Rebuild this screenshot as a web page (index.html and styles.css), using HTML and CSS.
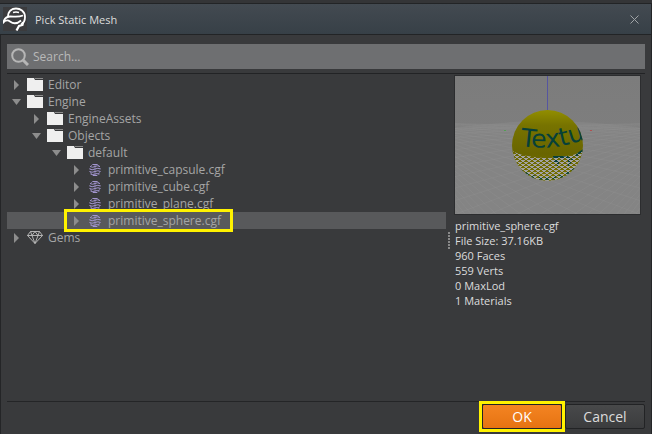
FILE: index.html
```html
<!DOCTYPE html>
<html lang="en">
<head>
<meta charset="utf-8">
<title>Pick Static Mesh</title>
<link rel="stylesheet" href="styles.css">
</head>
<body>
<svg width="0" height="0" class="sprites" aria-hidden="true">
  <symbol id="folder" viewBox="0 0 16 13"><path fill="#efefef" d="M0 0h7l1 2h8v11H0z"/><path fill="#8c8c8c" d="M8 0h8v1H8z"/></symbol>
  <symbol id="closed" viewBox="0 0 10 10"><path fill="#8d8d8d" d="M2 0l5 5-5 5z"/></symbol>
  <symbol id="open" viewBox="0 0 10 10"><path fill="#8d8d8d" d="M0 2h9L4.500 8z"/></symbol>
  <symbol id="mesh" viewBox="0 0 12 12"><g fill="none" stroke="#a295cf"><path d="M3.500 .5h5M1 2.500q2.500 1.500 5 0t5 0M.5 5q2.500 1.500 5.500 0t5.500 0M.5 7.500q2.500 1.500 5.500 0t5.500 0M1.500 10q2 1 4.500 0t4.500 0M4 11.500h4"/><path d="M3.500 .5l-2.500 2.500M8.500 .5l2.500 2.500M1 4v1M11 4v1M1 7.500l2.500 4M11 7.500l-2.500 4M6 1v10" stroke-width=".6"/></g></symbol>
  <symbol id="gem" viewBox="0 0 16 13"><path fill="none" stroke="#c0c0c0" d="M3.500.5h9L15.500 4.500 8 12.500.5 4.500zM.5 4.500h15M3.500.5l1.500 4 3 8 3-8 1.500-4M5 4.500l3-4 3 4" stroke-width=".9"/></symbol>
</svg>
<main class="dialog">
  <header class="titlebar">
    <svg class="logo" viewBox="0 0 24 24" aria-hidden="true"><path fill="#3b3b3d" d="M0 0h24v24H0z"/><g fill="none" stroke="#fff" stroke-width="1.800"><path d="M5 10C5 4 9 1.500 13 1.500S22 4 22 10c0 4-1 6-4 7.500"/><path d="M0 16.500C1 12 3 9.500 7 9.500c5 0 8 1 13-1"/><path d="M0 15.500C3 12.500 5 13 7 14.500s6 3.500 11-1"/><path d="M10 5.500q3-1 6 0" stroke-width="1.400"/><path d="M20 15l-.5 3-3.500 1-2.500 4.500" stroke-width="2.200"/></g></svg>
    <h1>Pick Static Mesh</h1>
    <button class="close" aria-label="Close"><svg viewBox="0 0 9 9"><path d="M.5.5l8 8M8.500.5l-8 8" stroke="#a0a4a7" stroke-width="1"/></svg></button>
  </header>
  <div class="body">
    <label class="search">
      <svg viewBox="0 0 18 18" aria-hidden="true"><g fill="none" stroke="#b6b6b6"><circle cx="7.500" cy="7.500" r="6.300" stroke-width="2"/><path d="M12 12l5 5" stroke-width="3"/></g></svg>
      <input type="text" placeholder="Search..." aria-label="Search">
    </label>
    <div class="content">
      <ul class="tree">
        <li><div class="row"><button aria-label="Expand Editor"><svg><use href="#closed"/></svg></button><svg class="icon"><use href="#folder"/></svg><span>Editor</span></div></li>
        <li><div class="row"><button aria-label="Collapse Engine"><svg><use href="#open"/></svg></button><svg class="icon"><use href="#folder"/></svg><span>Engine</span></div>
          <ul>
            <li><div class="row"><button aria-label="Expand EngineAssets"><svg><use href="#closed"/></svg></button><svg class="icon"><use href="#folder"/></svg><span>EngineAssets</span></div></li>
            <li><div class="row"><button aria-label="Collapse Objects"><svg><use href="#open"/></svg></button><svg class="icon"><use href="#folder"/></svg><span>Objects</span></div>
              <ul>
                <li><div class="row"><button aria-label="Collapse default"><svg><use href="#open"/></svg></button><svg class="icon"><use href="#folder"/></svg><span>default</span></div>
                  <ul>
                    <li><div class="row"><button aria-label="Expand primitive_capsule.cgf"><svg><use href="#closed"/></svg></button><svg class="icon mesh"><use href="#mesh"/></svg><span>primitive_capsule.cgf</span></div></li>
                    <li><div class="row"><button aria-label="Expand primitive_cube.cgf"><svg><use href="#closed"/></svg></button><svg class="icon mesh"><use href="#mesh"/></svg><span>primitive_cube.cgf</span></div></li>
                    <li><div class="row"><button aria-label="Expand primitive_plane.cgf"><svg><use href="#closed"/></svg></button><svg class="icon mesh"><use href="#mesh"/></svg><span>primitive_plane.cgf</span></div></li>
                    <li><div class="row selected"><div class="marked"><button aria-label="Expand primitive_sphere.cgf"><svg><use href="#closed"/></svg></button><svg class="icon mesh"><use href="#mesh"/></svg><span>primitive_sphere.cgf</span></div></div></li>
                  </ul>
                </li>
              </ul>
            </li>
          </ul>
        </li>
        <li><div class="row"><button aria-label="Expand Gems"><svg><use href="#closed"/></svg></button><svg class="icon"><use href="#gem"/></svg><span>Gems</span></div></li>
      </ul>
      <div class="splitter"></div>
      <aside class="preview">
        <svg class="view" viewBox="0 0 185 138" role="img" aria-label="Mesh preview">
          <defs>
            <linearGradient id="sky" x2="0" y2="1"><stop offset="0" stop-color="#7c7c7c"/><stop offset="1" stop-color="#818181"/></linearGradient>
            <linearGradient id="skin" x2="0" y2="1"><stop offset="0" stop-color="#949000"/><stop offset=".22" stop-color="#777300"/><stop offset=".6" stop-color="#696500"/><stop offset="1" stop-color="#777100"/></linearGradient>
            <pattern id="weave" width="6" height="4" patternUnits="userSpaceOnUse"><path fill="#a2a2a2" d="M0 0h4v1H0zM1 1h2v1H1zM3 2h3v1H3zM0 2h1v1H0zM4 3h2v1H4z"/></pattern>
            <clipPath id="ball"><circle cx="92.500" cy="69.500" r="35.500"/></clipPath>
            <path id="arc" d="M65 70Q95 74 115 68T150 56"/>
          </defs>
          <path fill="url(#sky)" d="M0 0h185v138H0z"/>
          <path fill="#848484" d="M0 52Q92 38 185 52v86H0z"/>
          <g id="floor" fill="none" stroke="#999" stroke-width=".6" opacity=".35"></g>
          <path stroke="#5555a0" d="M92.500 0v34"/>
          <path fill="#50a050" d="M49 54h2v1h-2z"/><path fill="#b05050" d="M135 54h2v1h-2z"/>
          <g clip-path="url(#ball)">
            <path fill="url(#skin)" d="M56 33h74v74H56z"/>
            <text class="texture"><textPath href="#arc">Textu</textPath></text>
            <path d="M98 81h15M98 85h5v5M114 81v7l4-6M121 80q5-5 8-6" fill="none" stroke="#084038" stroke-width="2"/>
            <path d="M64 94q28 18 58-2" fill="none" stroke="#164a34" stroke-width="3" stroke-dasharray="4 3"/>
            <path fill="url(#weave)" d="M56 74q10 7 36 8 28-1 38-8v33H56z"/>
          </g>
        </svg>
        <p>primitive_sphere.cgf</p>
        <p>File Size: 37.16KB</p>
        <p>960 Faces</p>
        <p>559 Verts</p>
        <p>0 MaxLod</p>
        <p>1 Materials</p>
      </aside>
    </div>
    <footer class="actions">
      <div class="marked"><button class="ok">OK</button></div>
      <button class="cancel">Cancel</button>
    </footer>
  </div>
</main>
<script src="floor.js"></script>
</body>
</html>
```
FILE: styles.css
```css
* { box-sizing: border-box; }
body {
  margin: 0;
  background: #343537;
  color: #dcdcdc;
  font: 12px/15px "Open Sans", "Noto Sans", sans-serif;
}
.sprites { position: absolute; }
button { font: inherit; padding: 0; border: 0; background: none; color: inherit; }
svg { display: block; flex: none; }
.dialog {
  display: flex;
  flex-direction: column;
  min-height: 100vh;
  padding-top: 3px;
}
.titlebar {
  display: flex;
  align-items: center;
  height: 32px;
  padding: 0 12px 0 3px;
  gap: 8px;
  border: 1px solid #222426;
  border-width: 1px 1px 1px 0;
  background: linear-gradient(#434a51, #374047);
}
.logo { width: 24px; height: 24px; }
h1 { flex: 1; margin: 0; font-size: 11px; font-weight: 400; }
.close { width: 9px; height: 9px; }
.close svg { width: 9px; height: 9px; }
.body {
  flex: 1;
  display: flex;
  flex-direction: column;
  padding: 9px 6px 5px;
  border: 1px solid #242527;
  border-width: 0 1px;
  background: #393a3c;
}
.search {
  display: flex;
  align-items: center;
  gap: 4px;
  height: 25px;
  padding: 0 4px;
  background: #6e6f71;
}
.search svg { width: 18px; height: 18px; }
.search input {
  flex: 1;
  min-width: 0;
  padding: 0;
  border: 0;
  outline: 0;
  background: none;
  color: #ddd;
  font: inherit;
}
.search input::placeholder { color: #b9b9b9; opacity: 1; }
.content {
  flex: 1;
  display: flex;
  margin-top: 4px;
  padding-top: 2px;
  border-top: 1px solid #222325;
}
ul { margin: 0; padding: 0; list-style: none; }
.tree { --indent: 0px; flex: 1; color: #a5a5a5; }
.tree ul { --indent: 20px; }
.tree ul ul { --indent: 40px; }
.tree ul ul ul { --indent: 60px; }
.row {
  display: flex;
  align-items: center;
  height: 17px;
  padding-left: calc(var(--indent) + 5px);
}
.row button, .row button svg { width: 10px; height: 10px; }
.row .icon { width: 16px; height: 13px; margin: 0 5px; }
.row .mesh { height: 12px; }
.selected { background: #58595b; }
.marked { position: relative; display: flex; align-items: center; }
.marked::after {
  content: "";
  position: absolute;
  inset: -3px;
  border: 3px solid #fff200;
  pointer-events: none;
}
.selected .marked::after { inset: -4px -12px -4px -8px; }
.splitter {
  width: 2px;
  height: 18px;
  margin: 156px 5px 0 2px;
  background: repeating-linear-gradient(#89898a 0 2px, transparent 2px 3px);
}
.preview { width: 190px; font-size: 11px; }
.view { width: 185px; height: 138px; margin-bottom: 4px; outline: 1px solid #2c2d2f; }
.texture { fill: #064039; font: 25px "DejaVu Sans", sans-serif; }
.preview p { margin: 0; }
.actions {
  display: flex;
  justify-content: flex-end;
  gap: 3px;
  padding-top: 2px;
  border-top: 1px solid #242527;
  font-size: 14px;
}
.actions button {
  width: 80px;
  height: 25px;
  border: 1px solid #222325;
  border-radius: 2px;
}
.ok { background: linear-gradient(#f48422, #e67312); color: #fff; }
.cancel { background: linear-gradient(#48494a, #3b3c3e); }
```
FILE: floor.js
```js
// Perspective lines of the preview's ground grid.
let d = "";
for (let i = 1; i < 28; i++) {
  const y = 52 + i * i * 0.6;
  d += `M-60 46L185 ${y}M245 46L0 ${y}`;
}
document.getElementById("floor").innerHTML = `<path d="${d}"/>`;
```
